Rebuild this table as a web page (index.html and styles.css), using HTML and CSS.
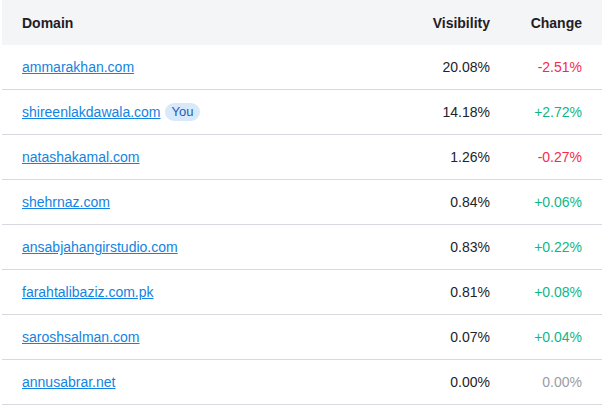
FILE: index.html
```html
<!DOCTYPE html>
<html lang="en">
<head>
<meta charset="utf-8">
<title>Domains</title>
<link rel="stylesheet" href="styles.css">
</head>
<body>
<div class="table">
  <div class="row head">
    <div class="cell">Domain</div>
    <div class="cell num">Visibility</div>
    <div class="cell num">Change</div>
  </div>
  <div class="row">
    <div class="cell"><a href="#">ammarakhan.com</a></div>
    <div class="cell num">20.08%</div>
    <div class="cell num neg">-2.51%</div>
  </div>
  <div class="row">
    <div class="cell"><a href="#">shireenlakdawala.com</a><span class="badge">You</span></div>
    <div class="cell num">14.18%</div>
    <div class="cell num pos">+2.72%</div>
  </div>
  <div class="row">
    <div class="cell"><a href="#">natashakamal.com</a></div>
    <div class="cell num">1.26%</div>
    <div class="cell num neg">-0.27%</div>
  </div>
  <div class="row">
    <div class="cell"><a href="#">shehrnaz.com</a></div>
    <div class="cell num">0.84%</div>
    <div class="cell num pos">+0.06%</div>
  </div>
  <div class="row">
    <div class="cell"><a href="#">ansabjahangirstudio.com</a></div>
    <div class="cell num">0.83%</div>
    <div class="cell num pos">+0.22%</div>
  </div>
  <div class="row">
    <div class="cell"><a href="#">farahtalibaziz.com.pk</a></div>
    <div class="cell num">0.81%</div>
    <div class="cell num pos">+0.08%</div>
  </div>
  <div class="row">
    <div class="cell"><a href="#">saroshsalman.com</a></div>
    <div class="cell num">0.07%</div>
    <div class="cell num pos">+0.04%</div>
  </div>
  <div class="row">
    <div class="cell"><a href="#">annusabrar.net</a></div>
    <div class="cell num">0.00%</div>
    <div class="cell num zero">0.00%</div>
  </div>
</div>
</body>
</html>
```
FILE: styles.css
```css
html, body {
  margin: 0;
  padding: 0;
  background: #ffffff;
}
body {
  font-family: "Liberation Sans", Arial, sans-serif;
  font-size: 14px;
  color: #222328;
}
.table {
  width: 600px;
  margin-left: 2px;
}
.row {
  display: grid;
  grid-template-columns: 1fr 110px 92px;
  height: 44px;
  align-items: center;
  border-bottom: 1px solid #d8d9de;
}
.row.head {
  background: #f4f5f7;
  border-bottom: none;
  height: 45px;
  font-weight: bold;
  color: #1f2024;
}
.cell {
  padding: 0 20px;
  display: flex;
  align-items: center;
  white-space: nowrap;
}
.cell.num {
  justify-content: flex-end;
}
.cell.num + .cell.num {
  padding-left: 0;
}
a {
  color: #1283e2;
  text-decoration: underline;
}
.badge {
  margin-left: 4px;
  background: #d8e9fb;
  color: #1a62b4;
  font-size: 13px;
  line-height: 18px;
  height: 18px;
  padding: 0 7px;
  border-radius: 9px;
}
.neg { color: #f7294d; }
.pos { color: #0bb88a; }
.zero { color: #9a9ca6; }
```
